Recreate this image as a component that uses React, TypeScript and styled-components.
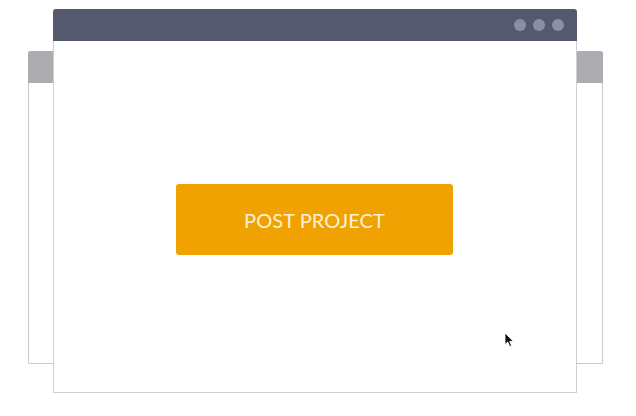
import React from "react";
import styled, { createGlobalStyle } from "styled-components";

const Global = createGlobalStyle`
  html, body { margin: 0; padding: 0; background: #ffffff; }
  body { font-family: Lato, "Open Sans", sans-serif; }
`;

const Stage = styled.div`
  position: relative;
  width: 636px;
  height: 416px;
  overflow: hidden;
  background: #ffffff;
`;

const BackWindow = styled.div`
  position: absolute;
  left: 28px;
  top: 51px;
  width: 575px;
  height: 313px;
  box-sizing: border-box;
  border: 1px solid #c9c9c9;
  border-top: none;
  border-radius: 3px 3px 2px 2px;
  background: #ffffff;
  display: flex;
  flex-direction: column;
`;

const BackHeader = styled.div`
  height: 32px;
  margin: 0 -1px;
  background: #adacb0;
  border-radius: 3px 3px 0 0;
`;

const FrontWindow = styled.div`
  position: absolute;
  left: 53px;
  top: 9px;
  width: 524px;
  height: 384px;
  display: flex;
  flex-direction: column;
`;

const TitleBar = styled.div`
  height: 32px;
  flex: none;
  background: #545970;
  border-radius: 3px 3px 0 0;
  display: flex;
  align-items: center;
  justify-content: flex-end;
  gap: 7px;
  padding-right: 13px;
`;

const Dot = styled.span`
  width: 12px;
  height: 12px;
  border-radius: 50%;
  background: #8b8fa5;
`;

const Content = styled.div`
  flex: 1;
  box-sizing: border-box;
  border: 1px solid #cfcfcf;
  border-top: none;
  background: #ffffff;
  display: flex;
  flex-direction: column;
  align-items: center;
  padding-top: 143px;
  padding-right: 1px;
`;

const PostButton = styled.button`
  width: 277px;
  height: 71px;
  border: none;
  border-radius: 3px;
  background: #f0a202;
  color: #fdf1d6;
  font-family: Lato, "Open Sans", sans-serif;
  font-size: 20px;
  font-weight: 400;
  letter-spacing: 0.1px;
  cursor: pointer;
  padding: 0;
`;

const Cursor = styled.svg`
  position: absolute;
  left: 504px;
  top: 332px;
`;

export default function App() {
  return (
    <Stage>
      <Global />
      <BackWindow>
        <BackHeader />
      </BackWindow>
      <FrontWindow>
        <TitleBar>
          <Dot />
          <Dot />
          <Dot />
        </TitleBar>
        <Content>
          <PostButton>POST PROJECT</PostButton>
        </Content>
      </FrontWindow>
      <Cursor width="12" height="16" viewBox="0 0 12 16">
        <path d="M1 1 L1 12.5 L3.8 10 L5.8 14.5 L7.6 13.7 L5.7 9.4 L9.3 9.3 Z" fill="#111" stroke="#fff" strokeWidth="0.8" />
      </Cursor>
    </Stage>
  );
}
